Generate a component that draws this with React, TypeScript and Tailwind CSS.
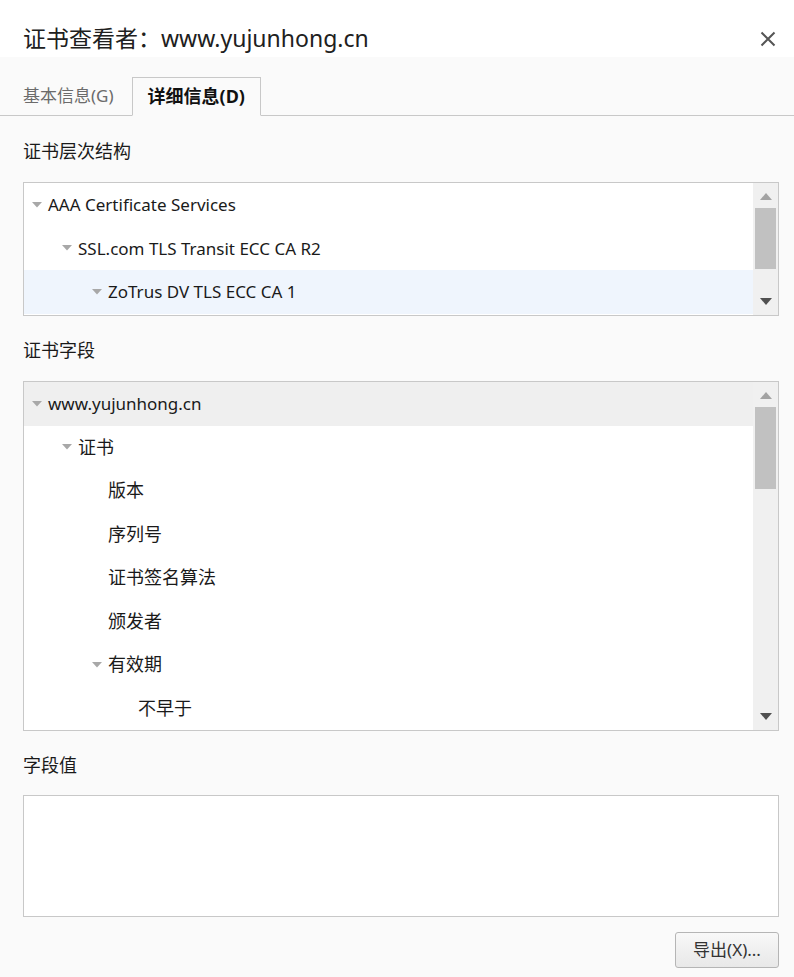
import React from "react";

const Tri = ({ className = "" }: { className?: string }) => (
  <svg width="10" height="6" viewBox="0 0 10 6" className={className}>
    <polygon points="0,0 10,0 5,5.5" fill="#a8a8a8" />
  </svg>
);

type Row = { text: string; level: number; arrow: boolean; hl?: string; cjk?: boolean };

const TreeRow = ({ r }: { r: Row }) => (
  <div
    className={`flex items-center h-[43.5px] ${r.hl ?? ""}`}
    style={{ paddingLeft: 8 + r.level * 30 }}
  >
    <div className="w-[16px] flex items-center">{r.arrow ? <Tri /> : null}</div>
    <span className={`${r.cjk ? "text-[18px]" : "text-[17px]"} text-[#1a1a1a] whitespace-nowrap`}>{r.text}</span>
  </div>
);

const ScrollBar = ({ thumbTop, thumbH }: { thumbTop: number; thumbH: number }) => (
  <div className="w-[25px] bg-[#f0f0f0] flex flex-col items-center relative shrink-0">
    <svg width="12" height="7" viewBox="0 0 12 7" className="mt-[10px]">
      <polygon points="0,7 12,7 6,0" fill="#a3a3a3" />
    </svg>
    <div className="absolute left-[2px] w-[21px] bg-[#c1c1c1]" style={{ top: thumbTop, height: thumbH }} />
    <div className="flex-1" />
    <svg width="12" height="7" viewBox="0 0 12 7" className="mb-[10px]">
      <polygon points="0,0 12,0 6,7" fill="#505050" />
    </svg>
  </div>
);

export default function App() {
  const hier: Row[] = [
    { text: "AAA Certificate Services", level: 0, arrow: true },
    { text: "SSL.com TLS Transit ECC CA R2", level: 1, arrow: true },
    { text: "ZoTrus DV TLS ECC CA 1", level: 2, arrow: true, hl: "bg-[#eff5fd]" },
  ];
  const fields: Row[] = [
    { text: "www.yujunhong.cn", level: 0, arrow: true, hl: "bg-[#efefef]" },
    { text: "证书", level: 1, arrow: true, cjk: true },
    { text: "版本", level: 2, arrow: false, cjk: true },
    { text: "序列号", level: 2, arrow: false, cjk: true },
    { text: "证书签名算法", level: 2, arrow: false, cjk: true },
    { text: "颁发者", level: 2, arrow: false, cjk: true },
    { text: "有效期", level: 2, arrow: true, cjk: true },
    { text: "不早于", level: 3, arrow: false, cjk: true },
  ];
  return (
    <div
      className="w-[794px] h-[977px] bg-[#fafafa] flex flex-col text-[#1a1a1a]"
      style={{ fontFamily: '"Segoe UI", "Noto Sans", "Noto Sans CJK SC", sans-serif' }}
    >
      <div className="h-[57px] bg-white flex items-center justify-between pl-[23px] pr-[18px] pt-[24px] pb-[4px]">
        <span className="text-[23px] text-[#202020] leading-none">证书查看者：www.yujunhong.cn</span>
        <svg width="16" height="16" viewBox="0 0 16 16">
          <path d="M1.5 1.5 L14.5 14.5 M14.5 1.5 L1.5 14.5" stroke="#555" strokeWidth="2" />
        </svg>
      </div>
      <div className="h-[59px] flex items-end border-b border-[#c8c8c8] pl-[23px]">
        <div className="h-[38px] flex items-center pr-[18px] text-[17px] text-[#6b6b6b]">基本信息(G)</div>
        <div className="h-[39px] -mb-px flex items-center px-[15px] border border-[#c8c8c8] border-b-[#fafafa] bg-[#fafafa] text-[18px] font-bold text-[#111]">
          详细信息(D)
        </div>
      </div>
      <div className="pl-[23px] pr-[15px] pt-[23px] flex flex-col">
        <div className="text-[18px] h-[24px] flex items-center">证书层次结构</div>
        <div className="mt-[19px] h-[134px] border border-[#c8c8c8] bg-white flex">
          <div className="flex-1 flex flex-col">
            {hier.map((r, i) => (
              <TreeRow key={i} r={r} />
            ))}
          </div>
          <ScrollBar thumbTop={25} thumbH={61} />
        </div>
        <div className="mt-[22px] text-[18px] h-[24px] flex items-center">证书字段</div>
        <div className="mt-[19px] h-[350px] border border-[#c8c8c8] bg-white flex overflow-hidden">
          <div className="flex-1 flex flex-col">
            {fields.map((r, i) => (
              <TreeRow key={i} r={r} />
            ))}
          </div>
          <ScrollBar thumbTop={25} thumbH={82} />
        </div>
        <div className="mt-[22px] text-[18px] h-[24px] flex items-center">字段值</div>
        <div className="mt-[18px] h-[122px] border border-[#c8c8c8] bg-white" />
        <div className="flex justify-end mt-[15px]">
          <button className="w-[104px] h-[36px] border border-[#b5b5b5] rounded-[3px] bg-gradient-to-b from-[#f8f8f8] to-[#e8e8e8] text-[17px] text-[#333]">
            导出(X)...
          </button>
        </div>
      </div>
    </div>
  );
}
